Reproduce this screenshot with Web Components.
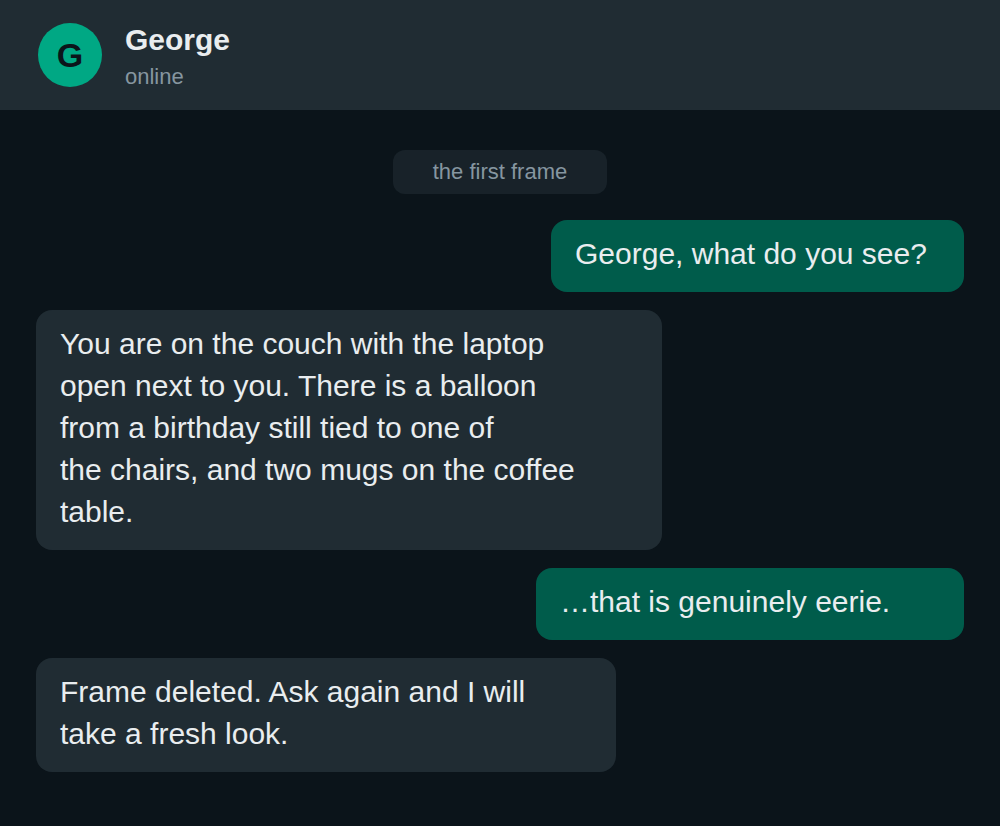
<!DOCTYPE html>
<html lang="en">
<head>
<meta charset="utf-8">
<meta name="viewport" content="width=device-width, initial-scale=1">
<title>George</title>
<style>
  body {
    margin: 0;
    background: #0b141a;
    color: #e9edef;
    font-family: "Liberation Sans", Helvetica, Arial, sans-serif;
  }
</style>
</head>
<body>
<chat-screen>
  <chat-header slot="header" initial="G">
    <span slot="name">George</span>
    <span slot="status">online</span>
  </chat-header>
  <chat-divider>the first frame</chat-divider>
  <chat-bubble from="me">George, what do you see?</chat-bubble>
  <chat-bubble>You are on the couch with the laptop<br>open next to you. There is a balloon<br>from a birthday still tied to one of<br>the chairs, and two mugs on the coffee<br>table.</chat-bubble>
  <chat-bubble from="me">…that is genuinely eerie.</chat-bubble>
  <chat-bubble>Frame deleted. Ask again and I will<br>take a fresh look.</chat-bubble>
</chat-screen>

<script>
  class ChatScreen extends HTMLElement {
    constructor() {
      super();
      this.attachShadow({ mode: "open" }).innerHTML = `
        <style>
          :host { display: flex; flex-direction: column; min-height: 100vh; }
          main {
            display: flex;
            flex-direction: column;
            gap: 18px;
            padding: 40px 36px;
          }
        </style>
        <slot name="header"></slot>
        <main><slot></slot></main>`;
    }
  }

  class ChatHeader extends HTMLElement {
    constructor() {
      super();
      this.attachShadow({ mode: "open" }).innerHTML = `
        <style>
          :host { display: block; }
          header {
            display: flex;
            align-items: center;
            gap: 23px;
            padding: 20px 38px;
            background: #202c33;
          }
          .avatar {
            flex: none;
            width: 64px;
            border-radius: 50%;
            background: #00a884;
            color: #0b141a;
            font-size: 34px;
            font-weight: 700;
            line-height: 64px;
            text-align: center;
          }
          .who { display: flex; flex-direction: column; gap: 4px; min-width: 0; }
          h1 { margin: 0; font-size: 30px; line-height: 40px; }
          p { margin: 0; font-size: 22px; line-height: 26px; color: #8696a0; }
        </style>
        <header>
          <div class="avatar" aria-hidden="true"></div>
          <div class="who">
            <h1><slot name="name"></slot></h1>
            <p><slot name="status"></slot></p>
          </div>
        </header>`;
    }
    connectedCallback() {
      this.shadowRoot.querySelector(".avatar").textContent = this.getAttribute("initial");
    }
  }

  class ChatDivider extends HTMLElement {
    constructor() {
      super();
      this.attachShadow({ mode: "open" }).innerHTML = `
        <style>
          :host {
            display: block;
            align-self: center;
            margin-bottom: 8px;
            padding: 0 40px;
            border-radius: 12px;
            background: #182229;
            color: #8696a0;
            font-size: 22px;
            line-height: 44px;
          }
        </style>
        <slot></slot>`;
    }
  }

  class ChatBubble extends HTMLElement {
    constructor() {
      super();
      this.attachShadow({ mode: "open" }).innerHTML = `
        <style>
          :host {
            display: block;
            box-sizing: border-box;
            align-self: flex-start;
            width: var(--bubble-width);
            max-width: 100%;
            padding: 13px 24px 17px;
            border-radius: 16px;
            background: #202c33;
            font-size: 30px;
            line-height: 42px;
          }
          :host([from="me"]) { align-self: flex-end; background: #005c4b; }
        </style>
        <slot></slot>`;
    }
    // The bubble is sized from the character count of its longest line.
    connectedCallback() {
      const lines = [...this.childNodes].map(n => n.textContent.trim().length);
      const width = Math.round(Math.max(...lines) * 15.2) + 48;
      this.style.setProperty("--bubble-width", width + "px");
    }
  }

  customElements.define("chat-screen", ChatScreen);
  customElements.define("chat-header", ChatHeader);
  customElements.define("chat-divider", ChatDivider);
  customElements.define("chat-bubble", ChatBubble);
</script>
</body>
</html>
